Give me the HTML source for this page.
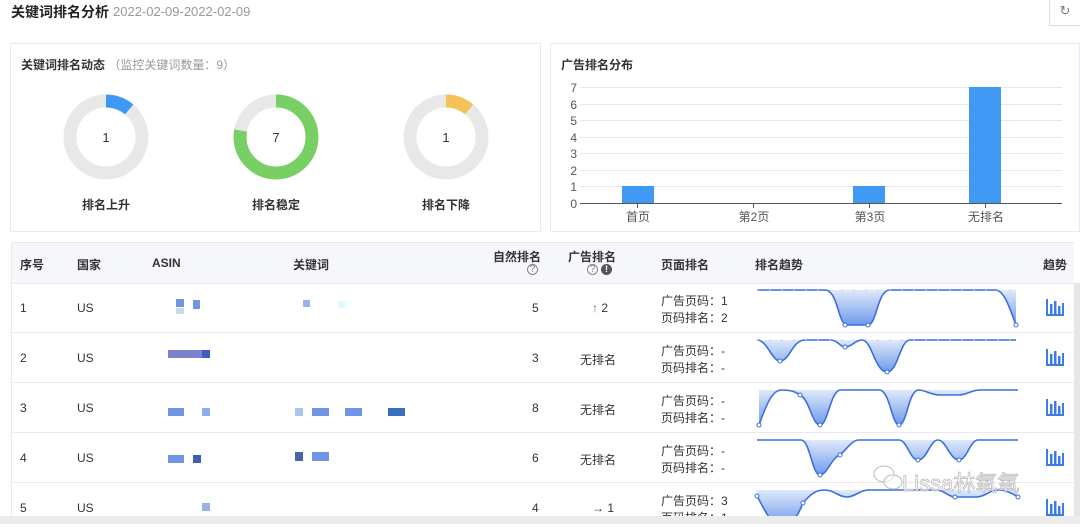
<!DOCTYPE html>
<html><head><meta charset="utf-8"><style>
body{margin:0;width:1080px;height:524px;background:#fff;font-family:"Liberation Sans","Noto Sans CJK SC",sans-serif;color:#333;position:relative;overflow:hidden;font-size:12px}
.a{position:absolute;white-space:nowrap}
.b{font-weight:bold}
.card{position:absolute;border:1px solid #e8eaf0;background:#fff}
.hl{position:absolute;left:11px;width:1063px;height:1px;background:#e8eaf0}
</style></head><body>
<div class="a b" style="left:11px;top:2px;font-size:14px;color:#222">关键词排名分析</div>
<div class="a" style="left:113px;top:4px;font-size:13px;color:#999">2022-02-09-2022-02-09</div>
<div class="a" style="left:1049px;top:-1px;width:30px;height:25px;border:1px solid #ddd;background:#fff;text-align:center;line-height:22px;color:#777;font-size:13px">↻</div>

<div class="card" style="left:10px;top:43px;width:529px;height:187px"></div>
<div class="card" style="left:550px;top:43px;width:528px;height:187px"></div>
<div class="a b" style="left:21px;top:56px;font-size:12px">关键词排名动态 <span style="font-weight:normal;color:#999">（监控关键词数量：9）</span></div>
<div class="a b" style="left:561px;top:56px;font-size:12px">广告排名分布</div>

<svg class="a" style="left:0;top:0" width="1080" height="524">
<g fill="none" stroke-width="13">
<circle cx="106" cy="137" r="36" stroke="#e8e8e8"/>
<circle cx="106" cy="137" r="36" stroke="#3f97f6" stroke-dasharray="25.1 300" transform="rotate(-90 106 137)"/>
<circle cx="276" cy="137" r="36" stroke="#e8e8e8"/>
<circle cx="276" cy="137" r="36" stroke="#78cf64" stroke-dasharray="175.9 300" transform="rotate(-90 276 137)"/>
<circle cx="446" cy="137" r="36" stroke="#e8e8e8"/>
<circle cx="446" cy="137" r="36" stroke="#f5c25a" stroke-dasharray="25.1 300" transform="rotate(-90 446 137)"/>
</g>
<g font-size="13" text-anchor="middle" fill="#333">
<text x="106" y="142">1</text><text x="276" y="142">7</text><text x="446" y="142">1</text></g>
<g font-size="12" font-weight="bold" text-anchor="middle" fill="#333" font-family="Liberation Sans,Noto Sans CJK SC,sans-serif">
<text x="106" y="209">排名上升</text><text x="276" y="209">排名稳定</text><text x="446" y="209">排名下降</text></g>
<g stroke="#e6e8f0" stroke-width="1">
<line x1="580" x2="1062" y1="87.5" y2="87.5"/><line x1="580" x2="1062" y1="104.5" y2="104.5"/><line x1="580" x2="1062" y1="120.5" y2="120.5"/><line x1="580" x2="1062" y1="137.5" y2="137.5"/><line x1="580" x2="1062" y1="153.5" y2="153.5"/><line x1="580" x2="1062" y1="170.5" y2="170.5"/><line x1="580" x2="1062" y1="186.5" y2="186.5"/></g>
<line x1="580" x2="1062" y1="203.5" y2="203.5" stroke="#555"/>
<g stroke="#555"><line x1="637.5" x2="637.5" y1="203" y2="208"/><line x1="753.5" x2="753.5" y1="203" y2="208"/><line x1="869.5" x2="869.5" y1="203" y2="208"/><line x1="985.5" x2="985.5" y1="203" y2="208"/></g>
<g fill="#4199f6"><rect x="622" y="186" width="32" height="17"/><rect x="853" y="186" width="32" height="17"/><rect x="969" y="87" width="32" height="116"/></g>
<g font-size="12" fill="#555" text-anchor="end"><text x="577" y="92">7</text><text x="577" y="109">6</text><text x="577" y="125">5</text><text x="577" y="142">4</text><text x="577" y="158">3</text><text x="577" y="175">2</text><text x="577" y="191">1</text><text x="577" y="208">0</text></g>
<g font-size="12" fill="#555" text-anchor="middle" font-family="Liberation Sans,Noto Sans CJK SC,sans-serif"><text x="638" y="221">首页</text><text x="754" y="221">第2页</text><text x="870" y="221">第3页</text><text x="986" y="221">无排名</text></g>
</svg>

<!-- table -->
<div class="a" style="left:11px;top:242px;width:1063px;height:41px;background:#f6f7fa;border-top:1px solid #e8eaf0"></div>
<div class="a" style="left:11px;top:242px;width:1px;height:274px;background:#e8eaf0"></div>
<div class="a" style="left:1074px;top:283px;width:6px;height:233px;background:#e6e6e6"></div>
<div class="hl" style="top:283px"></div><div class="hl" style="top:332px"></div><div class="hl" style="top:382px"></div><div class="hl" style="top:432px"></div><div class="hl" style="top:482px"></div>
<div class="a b" style="left:20px;top:256px">序号</div>
<div class="a b" style="left:77px;top:256px">国家</div>
<div class="a b" style="left:152px;top:256px">ASIN</div>
<div class="a b" style="left:293px;top:256px">关键词</div>
<div class="a b" style="left:493px;top:248px">自然排名</div>
<div class="a" style="left:527px;top:264px;color:#888;font-size:10px;border:1px solid #888;border-radius:50%;width:9px;height:9px;line-height:9px;text-align:center">?</div>
<div class="a b" style="left:568px;top:248px">广告排名</div>
<div class="a" style="left:587px;top:264px;color:#888;font-size:10px;border:1px solid #888;border-radius:50%;width:9px;height:9px;line-height:9px;text-align:center">?</div>
<div class="a" style="left:601px;top:264px;color:#fff;background:#555;font-size:9px;font-weight:bold;border-radius:50%;width:11px;height:11px;line-height:11px;text-align:center">!</div>
<div class="a b" style="left:661px;top:256px">页面排名</div>
<div class="a b" style="left:755px;top:256px">排名趋势</div>
<div class="a b" style="left:1043px;top:256px">趋势</div>

<div class="a" style="left:20px;top:301px">1</div><div class="a" style="left:77px;top:301px">US</div><div class="a" style="left:532px;top:301px">5</div><div class="a" style="left:592px;top:301px"><span style="color:#3a9a3a">↑</span> 2</div>
<div class="a" style="left:661px;top:293px;line-height:17px">广告页码：1<br>页码排名：2</div>
<div class="a" style="left:20px;top:351px">2</div><div class="a" style="left:77px;top:351px">US</div><div class="a" style="left:532px;top:351px">3</div><div class="a" style="left:580px;top:351px">无排名</div>
<div class="a" style="left:661px;top:343px;line-height:17px">广告页码：-<br>页码排名：-</div>
<div class="a" style="left:20px;top:401px">3</div><div class="a" style="left:77px;top:401px">US</div><div class="a" style="left:532px;top:401px">8</div><div class="a" style="left:580px;top:401px">无排名</div>
<div class="a" style="left:661px;top:393px;line-height:17px">广告页码：-<br>页码排名：-</div>
<div class="a" style="left:20px;top:451px">4</div><div class="a" style="left:77px;top:451px">US</div><div class="a" style="left:532px;top:451px">6</div><div class="a" style="left:580px;top:451px">无排名</div>
<div class="a" style="left:661px;top:443px;line-height:17px">广告页码：-<br>页码排名：-</div>
<div class="a" style="left:20px;top:501px">5</div><div class="a" style="left:77px;top:501px">US</div><div class="a" style="left:532px;top:501px">4</div><div class="a" style="left:592px;top:501px">→ 1</div>
<div class="a" style="left:661px;top:493px;line-height:17px">广告页码：3<br>页码排名：1</div>

<svg class="a" style="left:0;top:0" width="1080" height="516">
<defs><linearGradient id="g" x1="0" y1="0" x2="0" y2="1"><stop offset="0" stop-color="#dfe9fb"/><stop offset="1" stop-color="#6f9bea"/></linearGradient></defs>
<g fill="#6f95e4">
<rect x="176" y="299" width="8" height="8"/><rect x="193" y="300" width="7" height="9"/><rect x="176" y="308" width="8" height="6" fill="#cbd8ef"/><rect x="303" y="300" width="7" height="7" fill="#9db0f2"/><rect x="338" y="301" width="8" height="7" fill="#dffaff"/>
<rect x="168" y="350" width="42" height="8" fill="#7b82cc"/><rect x="202" y="350" width="8" height="8" fill="#3b5fc4"/>
<rect x="168" y="408" width="16" height="8"/><rect x="202" y="408" width="8" height="8" fill="#90acea"/><rect x="295" y="408" width="8" height="8" fill="#a8c6ee"/><rect x="312" y="408" width="17" height="8"/><rect x="345" y="408" width="17" height="8"/><rect x="388" y="408" width="17" height="8" fill="#3a6fc0"/>
<rect x="168" y="455" width="16" height="8"/><rect x="193" y="455" width="8" height="8" fill="#3b5fb8"/><rect x="295" y="452" width="8" height="9" fill="#4a62b0"/><rect x="312" y="452" width="17" height="9"/>
<rect x="202" y="503" width="8" height="8" fill="#9ab0ea"/>
</g>
<g fill="url(#g)">
<path d="M757 290 L825 290 C838 290 838 325 847 325 L868 325 C877 325 877 290 890 290 L995 290 C1005 290 1010 310 1016 325 L1016 290 Z"/>
<path d="M757 340 C767 340 772 361 780 361 C790 361 792 340 805 340 L830 340 C838 340 840 347 845 347 C852 347 855 340 862 340 C872 340 875 372 887 372 C898 372 900 340 910 340 L1016 340 Z"/>
<path d="M759 425 C768 400 773 390 782 390 C792 390 795 392 800 395 C810 400 812 425 820 425 C828 425 830 392 840 390 L880 390 C890 392 892 425 899 425 C907 425 908 392 918 390 C926 390 930 395 940 395 L959 395 C966 395 972 390 980 390 L1018 390 L759 390 Z"/>
<path d="M757 440 L801 440 C810 440 812 475 820 475 C827 475 832 457 840 455 C848 448 852 440 859 440 L899 440 C907 440 910 460 918 460 C927 460 930 440 938 440 C946 440 950 460 959 460 C967 460 970 440 978 440 L1018 440 Z"/>
<path d="M757 496 C765 510 770 525 782 525 C795 525 800 510 803 503 C810 495 815 490 824 490 C835 490 838 497 847 497 C855 497 860 490 868 490 L935 490 C945 490 948 497 955 497 L976 497 C985 497 990 490 997 490 C1005 490 1010 492 1018 497 L1018 490 L757 490 Z"/>
</g>
<g stroke="#3b6fe0" stroke-width="1.6" fill="none">
<path d="M757 290 L825 290 C838 290 838 325 847 325 L868 325 C877 325 877 290 890 290 L995 290 C1005 290 1010 310 1016 325"/>
<path d="M757 340 C767 340 772 361 780 361 C790 361 792 340 805 340 L830 340 C838 340 840 347 845 347 C852 347 855 340 862 340 C872 340 875 372 887 372 C898 372 900 340 910 340 L1016 340"/>
<path d="M759 425 C768 400 773 390 782 390 C792 390 795 392 800 395 C810 400 812 425 820 425 C828 425 830 392 840 390 L880 390 C890 392 892 425 899 425 C907 425 908 392 918 390 C926 390 930 395 940 395 L959 395 C966 395 972 390 980 390 L1018 390"/>
<path d="M757 440 L801 440 C810 440 812 475 820 475 C827 475 832 457 840 455 C848 448 852 440 859 440 L899 440 C907 440 910 460 918 460 C927 460 930 440 938 440 C946 440 950 460 959 460 C967 460 970 440 978 440 L1018 440"/>
<path d="M757 496 C765 510 770 525 782 525 C795 525 800 510 803 503 C810 495 815 490 824 490 C835 490 838 497 847 497 C855 497 860 490 868 490 L935 490 C945 490 948 497 955 497 L976 497 C985 497 990 490 997 490 C1005 490 1010 492 1018 497"/>
</g>
<g stroke="#aac2f0" stroke-width="0.8" stroke-dasharray="2 10" fill="none">
<line x1="757" x2="1016" y1="290" y2="290"/><line x1="757" x2="1016" y1="340" y2="340"/></g>
<g fill="#fff" stroke="#3b6fe0" stroke-width="1"><circle cx="845" cy="325" r="2"/><circle cx="868" cy="325" r="2"/><circle cx="1016" cy="325" r="2"/><circle cx="780" cy="361" r="2"/><circle cx="845" cy="347" r="2"/><circle cx="887" cy="372" r="2"/><circle cx="759" cy="425" r="2"/><circle cx="800" cy="395" r="2"/><circle cx="820" cy="425" r="2"/><circle cx="899" cy="425" r="2"/><circle cx="820" cy="475" r="2"/><circle cx="840" cy="455" r="2"/><circle cx="918" cy="460" r="2"/><circle cx="959" cy="460" r="2"/><circle cx="757" cy="496" r="2"/><circle cx="803" cy="503" r="2"/><circle cx="955" cy="497" r="2"/><circle cx="1018" cy="497" r="2"/></g>
<g fill="#3d7ce8">
<g id="ic"><rect x="1046" y="299" width="2" height="17"/><rect x="1046" y="314" width="18" height="2"/><rect x="1050" y="304" width="2.5" height="10"/><rect x="1054" y="301" width="2.5" height="13"/><rect x="1058" y="306" width="2.5" height="8"/><rect x="1062" y="303" width="2" height="11"/></g>
<use href="#ic" y="50"/><use href="#ic" y="100"/><use href="#ic" y="150"/><use href="#ic" y="200"/></g>
<g fill="#fff" fill-opacity="0.6" stroke="#bbb" stroke-width="1"><ellipse cx="884" cy="474" rx="10" ry="8"/><ellipse cx="893" cy="482" rx="9" ry="7"/></g>
<text x="902" y="491" font-size="22" fill="#fff" fill-opacity="0.7" stroke="#bbb" stroke-width="0.8" font-family="Liberation Sans,Noto Sans CJK SC,sans-serif">Lissa林氧氧</text>
</svg>
<div class="a" style="left:0;top:516px;width:1080px;height:8px;background:#ececec;z-index:5"></div>
</body></html>
